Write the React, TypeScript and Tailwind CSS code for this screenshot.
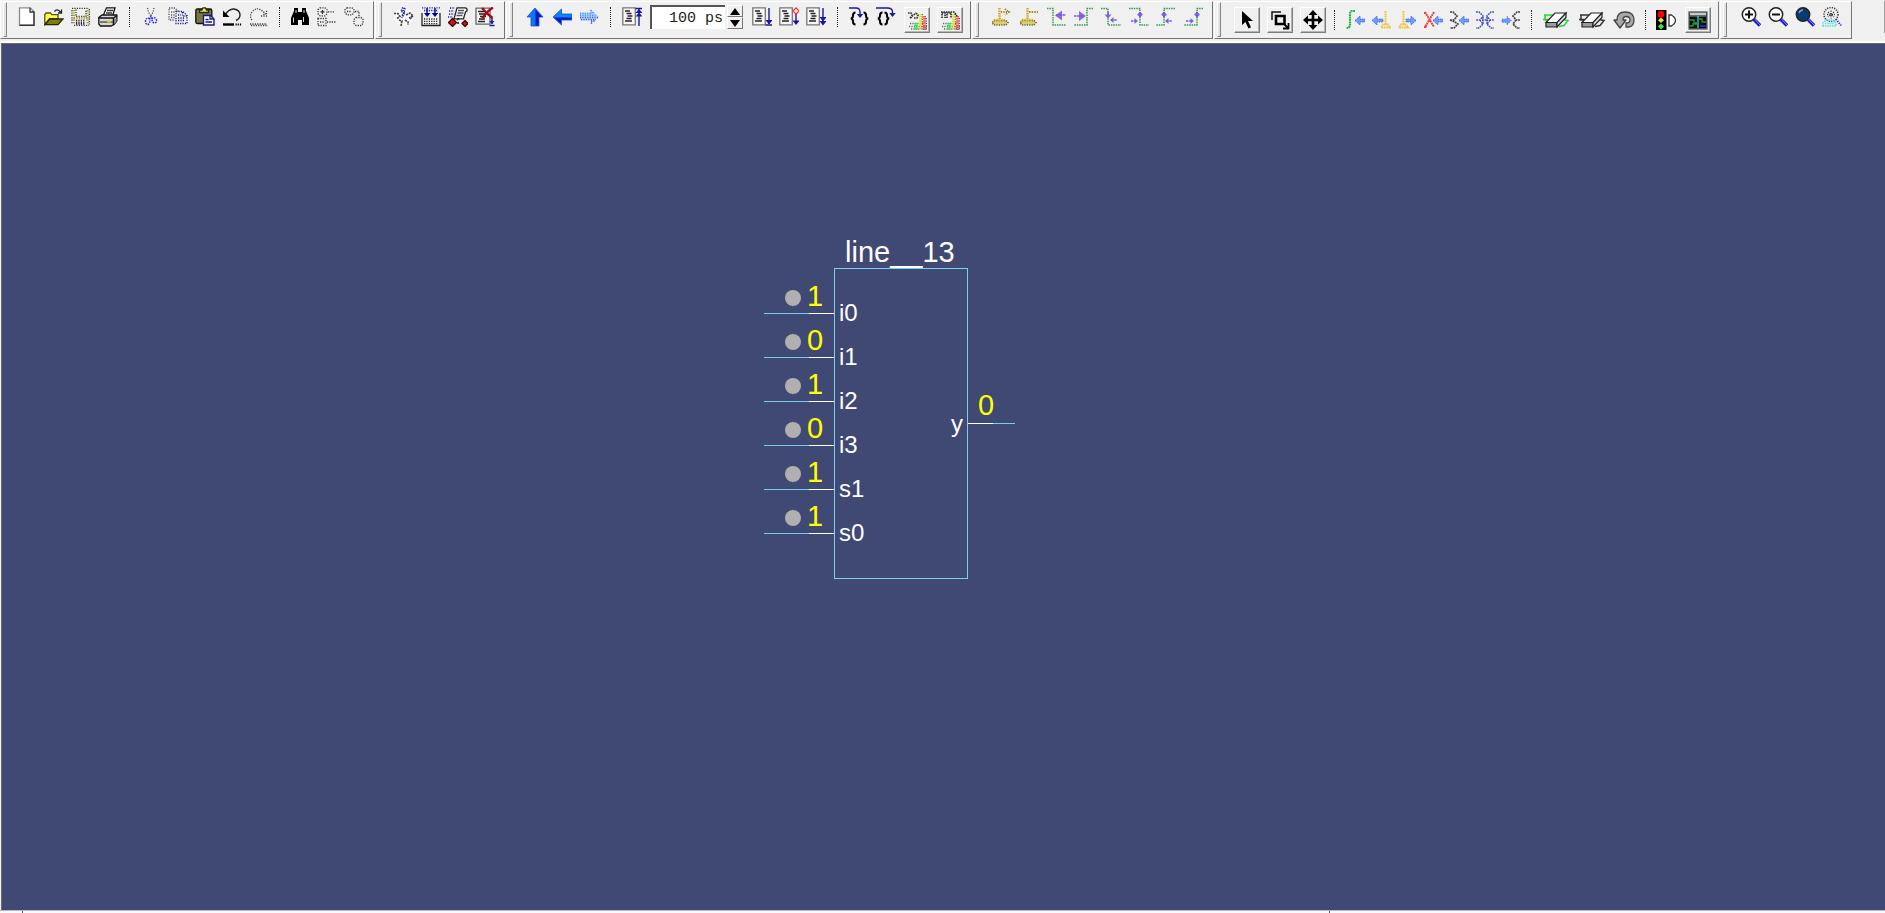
import type { ReactNode } from "react";

const DOT = "1.2 1.2";

function Icon({ children, w = 20 }: { children: ReactNode; w?: number }) {
  return (
    <svg width={w} height={20} viewBox={`0 0 ${w} 20`} fill="none" strokeWidth={1.3} aria-hidden="true" className="shrink-0">
      {children}
    </svg>
  );
}

function Tool({ label, children, width = "w-[27px]" }: { label: string; children: ReactNode; width?: string }) {
  return (
    <button type="button" aria-label={label} title={label} className={`flex h-7 ${width} shrink-0 items-center justify-center`}>
      {children}
    </button>
  );
}

function Raised({ label, children }: { label: string; children: ReactNode }) {
  return (
    <button
      type="button"
      aria-label={label}
      title={label}
      className="flex h-[26px] w-[26px] shrink-0 items-center justify-center border border-t-white border-r-[#7c7c7c] border-b-[#7c7c7c] border-l-white bg-[#f0f0f0] shadow-[inset_-1px_-1px_0_#b4b4b4]"
    >
      {children}
    </button>
  );
}

function Separator({ width = "w-3.5" }: { width?: string }) {
  return (
    <div className={`flex h-5 ${width} shrink-0 justify-center`}>
      <div className="h-5 border-l border-dotted border-[#222]" />
    </div>
  );
}

function Group({ label, pad, children }: { label: string; pad: string; children: ReactNode }) {
  return (
    <div
      role="toolbar"
      aria-label={label}
      className="mr-px flex h-[38px] shrink-0 border border-t-white border-r-[#757575] border-b-[#757575] border-l-white bg-[#f0f0f0]"
    >
      <div className="ml-0.5 h-[35px] w-1 shrink-0 border border-t-white border-r-[#858585] border-b-[#858585] border-l-white bg-[#e2e2e2]" />
      <div className={`flex h-9 items-center ${pad}`}>{children}</div>
    </div>
  );
}

/* File and edit icons */
const NewIcon = () => (
  <Icon>
    <path d="M2.500 18V.8h10.700l3.800 4V18z" fill="#fff" stroke="#8a8a8a" />
    <path d="M13 .8V5h4M17 4.600V18.400H2.400" stroke="#333" strokeWidth="1.300" />
  </Icon>
);
const OpenIcon = () => (
  <Icon>
    <path d="M.8 17.500V7.400L2 6h4.500l1.300 1.600H14v4H5.500z" fill="#ffff4d" stroke="#55551a" />
    <path d="M1 17.600 5.800 12H19l-5 5.600z" fill="#808000" stroke="#26260a" />
    <path d="M10.500 4.500Q13 1 16.500 5M17.500 2.500V6H14" stroke="#222" />
  </Icon>
);
const SaveIcon = () => (
  <Icon>
    <path d="M1 1.400h17M1 3v14M18.400 2v16M3 18.400h15M5 2.500v7h10v-7" stroke="#333" strokeDasharray={DOT} />
    <path d="M3 3v14M16.600 3v14M3 11h14" stroke="#a8a33c" strokeWidth="2.400" strokeDasharray={DOT} />
    <path d="M5 13.500h9M5 15.500h9M5 17h9" stroke="#222" strokeWidth="1.600" strokeDasharray={DOT} />
  </Icon>
);
const PrintIcon = () => (
  <Icon>
    <path d="M5 9 8.500.8H17L14.500 9" fill="#fff" stroke="#111" />
    <path d="M9 3.500h6M8 6h6" stroke="#333" />
    <path d="M.8 10.500 4 8h14.800v6L16 17.500l-3 1.500H2.500L.8 17z" fill="#d8d8d8" stroke="#111" />
    <path d="M.8 11h14.700v7M15.500 11 19 8.500" stroke="#111" strokeWidth="1.500" />
    <path d="M2 15h13" stroke="#444" />
    <path d="M9 13.500h4v2H9z" fill="#d6d600" />
    <path d="M16 11.500h2.500V15L16 17z" fill="#888" />
  </Icon>
);
const CutIcon = () => (
  <Icon>
    <path d="m6.500 1 1 4 2.500 4M13 1l-1 4-2 4" stroke="#555" strokeDasharray={DOT} />
    <path d="M9.800 9v3M9 11.500q-4-1-4.500 2 0 4 2.500 4 2-1 2-5M10.500 11.500q4-2 5 1.500 0 3-2 3-2.500-.5-2.500-4" stroke="#1616ff" strokeWidth="1.400" strokeDasharray="1.600 1" />
  </Icon>
);
const CopyIcon = () => (
  <Icon>
    <path d="M1 1h6l4 4M1 2v11h6M3 5h4M3 8h4M3 10.500h4" stroke="#555" strokeDasharray={DOT} />
    <path d="M8 4.500h7l4 4v8H8zM14.500 5v4H19M10 8h3M10 11h7M10 13.500h7" stroke="#16168c" strokeDasharray={DOT} />
  </Icon>
);
const PasteIcon = () => (
  <Icon>
    <rect x=".8" y="2" width="16" height="14.500" rx="1.500" fill="#78783c" stroke="#111" />
    <path d="M4.500 5.500V3h2.300L8 .8h2.500L11.500 3h2v2.500z" fill="#eeee30" stroke="#222" />
    <path d="M8.500 8.500h7l3.500 3.500v6H8.500z" fill="#fff" stroke="#16168c" strokeWidth="1.400" />
    <path d="M15 8.800V12h4M10.500 12.500h3M10.500 15h6.500" stroke="#16168c" />
  </Icon>
);
const UndoIcon = () => (
  <Icon>
    <path d="M2.500 8.500Q7 1.500 12 2q6 1 6 6 0 3.500-4 5.500" stroke="#222" strokeWidth="1.400" />
    <path d="M1 3.500V10h6.500z" fill="#000" />
    <path d="M1 17.500h11" stroke="#000" strokeWidth="2.400" />
    <path d="M13.500 17.500h6.500" stroke="#000" strokeWidth="2.200" strokeDasharray="1.200 1" />
  </Icon>
);
const RedoIcon = () => (
  <Icon>
    <path d="M3 13Q0 9 3 5q4-5 9-2l5 4M12 9h5.500V3M15 8V5" stroke="#444" strokeDasharray={DOT} />
    <path d="M1 17h17M2 18.500h17" stroke="#444" strokeDasharray={DOT} />
  </Icon>
);
const FindIcon = () => (
  <Icon>
    <path d="M4 1h4v4h4V1h4v3l3 7v7h-7v-5H8v5H1v-7l3-7z" fill="#000" />
    <path d="M3.500 10.500v5M13.500 10v5M6 3v3M14 3v3" stroke="#ddd" strokeWidth="1" />
  </Icon>
);
const ExpandIcon = () => (
  <Icon>
    <path d="M3 .8h5l2 2v4l-2 2H3l-2-2v-4zM11 4.800h7M1 11.500h8v7H1zM10 15h9M3 15h4" stroke="#333" strokeDasharray={DOT} />
    <path d="M3.500 4.800h4M5.500 3v4" stroke="#333" />
  </Icon>
);
const CollapseIcon = () => (
  <Icon>
    <path d="M3 .8h5l2 2v3l-2 2H3l-2-2v-3zM11 4.500h4V10M12 10.500h5l2 2v4l-2 2h-5l-2-2v-4zM3 4.500h4" stroke="#333" strokeDasharray={DOT} />
  </Icon>
);

/* Compile icons */
const CompileIcon = () => (
  <Icon>
    <ellipse cx="10" cy="10" rx="9.500" ry="9" fill="#fafafa" />
    <path d="m9 .5-2 4h4l-3 4.500M11 1l-1.500 3M10 6l-2 5" stroke="#2020b8" strokeWidth="2" strokeDasharray={DOT} />
    <path d="M0 6.500h4l2 3-3 2M5 13l3 1-1 5M12 8l4-2 3 3-4 2M11 13l3 2v3M16 12l3-3" stroke="#444" strokeWidth="1.700" strokeDasharray="2.200 .8" />
  </Icon>
);
const CompileAllIcon = () => (
  <Icon>
    <path d="M1 .8h18M3 3.500h14" stroke="#2020b8" strokeDasharray={DOT} />
    <path d="M6 1v6M14 1v6" stroke="#000098" strokeWidth="1.400" />
    <path d="M3 6h6.500L6.200 10zM10.700 6h6.500L14 10z" fill="#000098" />
    <path d="M1 6v12.500h18V6" stroke="#222" />
    <path d="M3 12h14M3 14.300h14M3 16.600h14" stroke="#222" strokeDasharray={DOT} />
  </Icon>
);
const SimulateIcon = () => (
  <Icon>
    <path d="M2 1h5M1 4h5M1 7h5M0 10h5" stroke="#1c1c9c" strokeDasharray={DOT} />
    <path d="M9 .8h8q2.500 0 2 3l-1.500 1-2 7H6z" fill="#fff" stroke="#222" />
    <path d="M10 3.500h6M9.500 6h6M8.500 8.500h6" stroke="#556" />
    <path d="m4.500 11.500 4 4-4 4-4-4zM17 13.500l3 3-3 3-3-3z" fill="#d0101c" stroke="#400" />
    <path d="m9 13 2-1.500M9 16h2" stroke="#111" strokeWidth="1.300" />
  </Icon>
);
const BreakIcon = () => (
  <Icon>
    <path d="M1 1.200h14v16H1z" fill="#f4f4f4" stroke="#666" />
    <path d="M3 4.500h6M4 7h6M5 9.500h6M4 12h6M3 14.500h7" stroke="#222" strokeWidth="1.500" />
    <path d="M7 1q4 5 10.500 10M18 .5Q11 5 7.500 11.500" stroke="#a40a18" strokeWidth="2.400" />
    <path d="M17 11v6M14.500 18.500h5" stroke="#1818a0" strokeWidth="1.400" />
    <path d="M14.500 14h5L17 17z" fill="#1818a0" />
  </Icon>
);

/* Run icons */
const UpIcon = () => (
  <Icon>
    <path d="M10 1 18 10h-4v9H6v-9H2z" fill="#0a78f5" stroke="#1450c8" strokeWidth=".8" />
    <path d="M10.500 2.500 17 10h-3.500v8.500h-3z" fill="#0a14c0" />
  </Icon>
);
const BackIcon = () => (
  <Icon>
    <path d="M1 10 9.500 2v5H20v6H9.500v5z" fill="#0a86fa" stroke="#1450c8" strokeWidth=".8" />
    <path d="M2 10.500h17.500v2.200H9v4z" fill="#0a14c0" />
  </Icon>
);
const ForwardIcon = () => (
  <Icon>
    <path d="M1 6.500h11M1 8.500h16M12 3v4M14 5v3" stroke="#3b8af2" strokeWidth="1.600" strokeDasharray={DOT} />
    <path d="M1 10.500h18M2 12.500h15M12 14h4M12 16h2" stroke="#3434c4" strokeWidth="1.600" strokeDasharray={DOT} />
    <path d="M1 5.500h10.500V2L20 9.800 11.500 17v-3.500H1z" fill="#5aa6ff" fillOpacity=".35" />
  </Icon>
);
const Sheet = () => (
  <>
    <path d="M.8.8h12.500v17H.8z" fill="#f8f8f8" stroke="#777" />
    <path d="M3 4h5M4.500 6.500h5M5.500 9h5M4.500 11.500h5M3 14h7" stroke="#222" strokeWidth="1.400" />
  </>
);
const RestartIcon = () => (
  <Icon>
    <Sheet />
    <path d="M17 1v18M13.500 1.500H20" stroke="#1818a0" strokeWidth="1.400" />
    <path d="M13.500 6 17 2l3.500 4zM13.500 9.500 17 5.500l3.500 4z" fill="#1818a0" />
  </Icon>
);
const RunIcon = () => (
  <Icon>
    <Sheet />
    <path d="M17 1v16M13.500 18h6.500" stroke="#1818a0" strokeWidth="1.400" />
    <path d="M13.500 13h7L17 17.500z" fill="#1818a0" />
  </Icon>
);
const ContinueIcon = () => (
  <Icon>
    <Sheet />
    <path d="M17 7v10" stroke="#1818a0" strokeWidth="1.400" />
    <path d="M13.500 13.500h7L17 18z" fill="#1818a0" />
    <path d="m17 1 3 3-3 3-3-3z" fill="#fff" stroke="#ff3030" />
  </Icon>
);
const RunAllIcon = () => (
  <Icon>
    <Sheet />
    <path d="M17 1v16" stroke="#1818a0" strokeWidth="1.400" />
    <path d="M13.500 10h7L17 14.500zM13.500 14h7L17 18.500z" fill="#1818a0" />
  </Icon>
);
const StepIcon = () => (
  <Icon>
    <path d="M6.500 5.500q-2.500 0-2.500 3t-2.300 3q2.300 0 2.300 3t2.500 3M14.500 5.500q2.500 0 2.500 3t2.300 3q-2.300 0-2.300 3t-2.500 3" stroke="#000" strokeWidth="2" />
    <path d="M0 1h7q4 0 4 4v3" stroke="#1818a0" strokeWidth="1.400" />
    <path d="M7.800 7h6.400L11 11z" fill="#1818a0" />
  </Icon>
);
const StepOverIcon = () => (
  <Icon>
    <path d="M6.500 5.500q-2.500 0-2.500 3t-2.300 3q2.300 0 2.300 3t2.500 3M8.500 5.500q2.500 0 2.500 3t2.300 3q-2.300 0-2.300 3t-2.500 3" stroke="#000" strokeWidth="2" />
    <path d="M0 1h11.500q5 0 5 4v2" stroke="#1818a0" strokeWidth="1.400" />
    <path d="M13.300 6h6.400l-3.200 4z" fill="#1818a0" />
  </Icon>
);
const Bars = () => (
  <>
    <path d="M2 16.500h18M3 13.500h14M4 19h16" stroke="#666" strokeWidth="1.500" strokeDasharray={DOT} />
    <path d="M9 13v7" stroke="#28e848" strokeWidth="3.600" strokeDasharray="1.500 .6" />
    <path d="M13.500 4v16" stroke="#e8e020" strokeWidth="2.800" strokeDasharray="1.500 .6" />
    <path d="M17.500 6v14" stroke="#f04848" strokeWidth="2.800" strokeDasharray="1.500 .6" />
    <path d="M15.300 4v16M19.500 8v12" stroke="#555" strokeWidth="1" strokeDasharray={DOT} />
  </>
);
const ProfileIcon = () => (
  <Icon>
    <Bars />
    <path d="M1 3h3l1 2-1 3M3 8l6-5M7 8h3l1-3-2-2" stroke="#333" strokeWidth="1.700" strokeDasharray="1.600 .8" />
  </Icon>
);
const MemoryIcon = () => (
  <Icon>
    <Bars />
    <path d="M2 8V3h3v5M7 8V3h4v5M1 2h13l3 4" stroke="#333" strokeWidth="1.700" strokeDasharray="1.600 .8" />
  </Icon>
);

/* Wave editing icons */
const Base = () => (
  <>
    <path d="M3 13.500h12l2 2-2 2.500H3l-2-2z" fill="#d8cf76" stroke="#6c6024" strokeWidth="1.600" strokeDasharray={DOT} />
    <path d="M8.500 1v13" stroke="#cda827" strokeWidth="2.400" strokeDasharray="1.600 .8" />
    <path d="M3 12.500h12" stroke="#e0c030" strokeWidth="1.500" strokeDasharray="1.600 .8" />
  </>
);
const InsertPulseIcon = () => (
  <Icon>
    <Base />
    <path d="M10 5h8M14 2l4 3-4 3" stroke="#a08420" strokeWidth="1.900" strokeDasharray={DOT} />
  </Icon>
);
const DeleteEdgeIcon = () => (
  <Icon>
    <Base />
    <path d="M10 5h9" stroke="#a88c28" strokeWidth="2" strokeDasharray="1.600 1" />
  </Icon>
);
function EdgeIcon({ wave, arrow, tips }: { wave: string; arrow: string; tips: string }) {
  return (
    <Icon>
      <path d={wave} stroke="#2c9c50" strokeWidth="1.500" strokeDasharray="1.500 .9" />
      <path d={arrow} stroke="#7858dc" strokeWidth="1.500" strokeDasharray="2.500 .7" />
      <path d={tips} fill="#7850e0" fillOpacity=".85" />
    </Icon>
  );
}

/* Dataflow icons */
const BlueArrow = ({ d }: { d: string }) => (
  <path d={d} fill="#6c9cff" stroke="#3060e8" strokeWidth="1" strokeDasharray={DOT} />
);
const toLeft = "m10 10.500 5-4.500v3h5v3h-5v3z";
const DriversIcon = () => (
  <Icon>
    <path d="M10 1H6.500L5 3v13l-1.500 2H1" stroke="#22b43c" strokeWidth="2.200" strokeDasharray="1.800 .6" />
    <BlueArrow d={toLeft} />
  </Icon>
);
const ReadersIcon = () => (
  <Icon>
    <path d="M14.500 1v14M10 17.500l2-3h5l2 3z" stroke="#ecc83c" strokeWidth="2" strokeDasharray="1.800 .6" />
    <BlueArrow d="m1 10.500 5-4.500v3h6v3H6v3z" />
  </Icon>
);
const NextReadIcon = () => (
  <Icon>
    <path d="M6.500 1v14M2 17.500l2-3h5l2 3z" stroke="#ecc83c" strokeWidth="2" strokeDasharray="1.800 .6" />
    <BlueArrow d="m19 10.500-5-4.500v3H9v3h5v3z" />
  </Icon>
);
const TraceXIcon = () => (
  <Icon>
    <path d="m2 2 9 15M11 2 2 17M1 3h2M1 17h3" stroke="#f23c3c" strokeWidth="1.900" strokeDasharray="2 .5" />
    <BlueArrow d={toLeft} />
  </Icon>
);
const forkRight = "M1 2h3l4 4-3 4H1M1 10l3 1 5 3-4 4H1";
const ForkInIcon = () => (
  <Icon>
    <path d={forkRight} stroke="#444" strokeWidth="1.700" strokeDasharray="2 .6" />
    <BlueArrow d={toLeft} />
  </Icon>
);
const ExpandNetIcon = () => (
  <Icon>
    <path d="M1 2h3l4 4-3 4H1M5 10l3 4-4 4H1M19 2h-3l-4 4 3 4h4M15 10l-3 4 4 4h3M8 7v7M12 7v7M7 10h6" stroke="#4050b8" strokeWidth="1.500" strokeDasharray="1.800 .8" />
  </Icon>
);
const ForkOutIcon = () => (
  <Icon>
    <path d="M19 2h-3l-4 4 3 4h4M15 10l-3 4 4 4h3" stroke="#444" strokeWidth="1.700" strokeDasharray="2 .6" />
    <BlueArrow d="m10 10.500-4-4v2.700H1v3h5v2.600z" />
  </Icon>
);
function EraserIcon({ wire }: { wire: string }) {
  return (
    <Icon w={28}>
      <path d="M2 5h9M3 5v5h4M1 9.500h5M21 9.500l5 1-4 5-5 1" stroke={wire} strokeWidth="1.500" />
      <path d="M13 3h11l-8.500 9.500H4z" fill="#fff" stroke="#222" strokeWidth="1.200" />
      <path d="M4 12.500h11V17H4z" fill="#9a9a9a" stroke="#222" strokeWidth="1.200" />
      <path d="m15 12.500 9-9.500v4.500L15 17z" fill="#ddd" stroke="#222" strokeWidth="1.200" />
    </Icon>
  );
}
const RefreshIcon = () => (
  <Icon w={22}>
    <path d="M1 10h3Q4 2 12 2q9 0 9 8 0 6-5 7h-3v-4q4 0 4-3 0-3.500-4-3.500-3 0-3 3.500h3l-6 8z" fill="#a8a8a8" stroke="#444" strokeLinejoin="round" />
  </Icon>
);
const TrafficIcon = () => (
  <Icon>
    <path d="M0 0h10.500v20H0z" fill="#000" />
    <circle cx="5" cy="4.200" r="3.400" fill="#f00" />
    <path d="m5 7.500 3 2.700-3 2.700-3-2.700z" fill="#e8e030" />
    <path d="m5 13.500 3 3-3 3-3-3z" fill="#2cf040" />
    <path d="M13 5h2.500q4 2.500 4 5.500t-4 5.500H13z" fill="#fff" stroke="#333" />
  </Icon>
);
const WaveWindowIcon = () => (
  <Icon>
    <path d="M1 2h18v17H1z" fill="#0a0a0a" stroke="#666" />
    <path d="M2 4h16" stroke="#c4ccd0" strokeWidth="2.600" />
    <path d="M2 6h16" stroke="#708088" />
    <path d="M2 10h4v3h3M11 9h3v3h4M2 16h3v-2h4" stroke="#18a038" />
    <path d="M10 6v12" stroke="#30d8e8" />
    <path d="M12 16h6" stroke="#3828d8" strokeWidth="1.600" />
  </Icon>
);

/* Zoom icons */
function Lens({ fill, sign }: { fill: string; sign?: string }) {
  return (
    <Icon>
      <path d="m13 12.500 6 6" stroke="#1c1ccf" strokeWidth="3.600" />
      <path d="m13.500 12 5.500 6" stroke="#8888f0" strokeWidth="1" />
      <circle cx="8" cy="7.500" r="6.700" fill={fill} stroke="#222" strokeWidth="1.500" />
      {sign ? <path d={sign} stroke="#111" strokeWidth="2" /> : <path d="M4 6q1-3 4-3" stroke="#7ca4c8" strokeWidth="1.400" />}
    </Icon>
  );
}
const ZoomRangeIcon = () => (
  <Icon>
    <circle cx="9" cy="7.500" r="7" stroke="#333" strokeWidth="1.500" strokeDasharray={DOT} />
    <path d="M5 7.500h8M9 3.500v8M6 5l6 5M12 5l-6 5" stroke="#333" strokeWidth="1.300" strokeDasharray={DOT} />
    <path d="M1 19v-3l3-3h7l3 3v3zM3 16.500h9" stroke="#4ce0ea" strokeWidth="1.600" strokeDasharray="1.500 .9" />
    <path d="m14 12 5 6.500" stroke="#2c2cc8" strokeWidth="2" strokeDasharray={DOT} />
  </Icon>
);

const EDGES = [
  { label: "Stretch edge left", wave: "M1 1.500h6v16.500h14", arrow: "M10 8h11", tips: "m9 8.500 7-5v10z" },
  { label: "Stretch edge right", wave: "M19 1.500h-6V18H0", arrow: "M0 9h10", tips: "m12 9-7-5v10z" },
  { label: "Move edge down", wave: "M0 1.500h7V18h13", arrow: "M7 5v5M10 13h6", tips: "M3.500 7.500h7L7 11.500zM9 13l3.500-3v6z" },
  { label: "Extend falling edge", wave: "M0 1.500h11V18h9", arrow: "M11 5v5M2 14h6", tips: "m11 4.500 3 3-3 3-3-3zM9 14l-3.500-3v6z" },
  { label: "Extend rising edge", wave: "M19 1.500H8V18H0", arrow: "M8 5v5M10 14h6", tips: "m8 4.500 3 3-3 3-3-3zM9 14l3.500-3v6z" },
  { label: "Invert edge", wave: "M19 1.500h-6V18H0", arrow: "M13 5v5M2 14h6", tips: "m13 4.500 3 3-3 3-3-3zM10 14l-3.500-3v6z" },
];

const INPUTS = [
  { name: "i0", value: 1 },
  { name: "i1", value: 0 },
  { name: "i2", value: 1 },
  { name: "i3", value: 0 },
  { name: "s1", value: 1 },
  { name: "s0", value: 1 },
];

function Toolbars() {
  return (
    <header className="flex h-[43px] shrink-0 overflow-hidden border-b-2 border-white bg-[#f0f0f0] pt-px">
      <Group label="Standard" pad="pl-1.5 pr-1.5 pb-1.5">
        <Tool label="New"><NewIcon /></Tool>
        <Tool label="Open"><OpenIcon /></Tool>
        <Tool label="Save"><SaveIcon /></Tool>
        <Tool label="Print"><PrintIcon /></Tool>
        <Separator width="w-4" />
        <Tool label="Cut"><CutIcon /></Tool>
        <Tool label="Copy"><CopyIcon /></Tool>
        <Tool label="Paste"><PasteIcon /></Tool>
        <Tool label="Undo"><UndoIcon /></Tool>
        <Tool label="Redo"><RedoIcon /></Tool>
        <Separator />
        <Tool label="Find"><FindIcon /></Tool>
        <Tool label="Expand"><ExpandIcon /></Tool>
        <Tool label="Collapse"><CollapseIcon /></Tool>
      </Group>

      <Group label="Compile" pad="pl-2 pr-1.5 pb-1.5">
        <Tool label="Compile"><CompileIcon /></Tool>
        <Tool label="Compile all"><CompileAllIcon /></Tool>
        <Tool label="Simulate"><SimulateIcon /></Tool>
        <Tool label="Break"><BreakIcon /></Tool>
      </Group>

      <Group label="Simulate" pad="pl-2 pr-[7px]">
        <div className="flex items-center pb-1.5">
          <Tool label="Up"><UpIcon /></Tool>
          <Tool label="Back"><BackIcon /></Tool>
          <Tool label="Forward"><ForwardIcon /></Tool>
          <Separator width="w-4" />
          <Tool label="Restart"><RestartIcon /></Tool>
          <input
            type="text"
            aria-label="Run length"
            defaultValue="100 ps"
            className="ml-[5px] h-6 w-[75px] border-t-2 border-l-2 border-[#555] bg-white pr-0.5 text-right font-['Liberation_Mono',monospace] text-[15px] text-[#222] outline-none"
          />
          <div className="mr-[5px] ml-0.5 flex w-4 flex-col">
            <button type="button" aria-label="Increase run length" className="flex h-3 items-center justify-center border border-t-white border-r-[#777] border-b-[#777] border-l-white">
              <svg width="10" height="7" viewBox="0 0 10 7" aria-hidden="true"><path d="M5 0 10 7H0z" /></svg>
            </button>
            <button type="button" aria-label="Decrease run length" className="flex h-3 items-center justify-center border border-t-white border-r-[#777] border-b-[#777] border-l-white">
              <svg width="10" height="7" viewBox="0 0 10 7" aria-hidden="true"><path d="M0 0h10L5 7z" /></svg>
            </button>
          </div>
          <Tool label="Run"><RunIcon /></Tool>
          <Tool label="Continue"><ContinueIcon /></Tool>
          <Tool label="Run all"><RunAllIcon /></Tool>
          <Separator width="w-4" />
          <Tool label="Step"><StepIcon /></Tool>
          <Tool label="Step over"><StepOverIcon /></Tool>
        </div>
        <div className="ml-[5px] flex gap-[7px]">
          <Raised label="Performance profiling"><ProfileIcon /></Raised>
          <Raised label="Memory profiling"><MemoryIcon /></Raised>
        </div>
      </Group>

      <Group label="Wave edit" pad="pl-3 pr-2 pb-1.5">
        <div className="flex w-[213px] justify-between">
          <Tool label="Insert pulse" width="w-5"><InsertPulseIcon /></Tool>
          <Tool label="Delete edge" width="w-5"><DeleteEdgeIcon /></Tool>
          {EDGES.map((e) => (
            <Tool key={e.label} label={e.label} width="w-5">
              <EdgeIcon wave={e.wave} arrow={e.arrow} tips={e.tips} />
            </Tool>
          ))}
        </div>
      </Group>

      <Group label="Dataflow" pad="pl-[13px] pr-[7px]">
        <div className="flex gap-[7px]">
          <Raised label="Select mode">
            <Icon><path d="M5 1v14l3.500-3 3 6.500 2.500-1.200-3-6.300h5z" fill="#000" /></Icon>
          </Raised>
          <Raised label="Zoom mode">
            <Icon>
              <path d="M2 10V2h9" stroke="#111" strokeWidth="1.500" />
              <path d="M6 6h8.500v8H6z" stroke="#000" strokeWidth="2.600" />
              <path d="m14 14 4 4M13 18.500h6M18.500 13v6" stroke="#000" strokeWidth="1.800" />
            </Icon>
          </Raised>
          <Raised label="Pan mode">
            <Icon>
              <path d="M10 2v16M2 10h16" stroke="#000" strokeWidth="2.600" />
              <path d="m10 0 4.500 5h-9zM10 20l4.500-5h-9zM0 10l5-4.500v9zM20 10l-5-4.500v9z" fill="#000" />
            </Icon>
          </Raised>
        </div>
        <Separator width="w-4" />
        <Tool label="Trace drivers" width="w-[26px]"><DriversIcon /></Tool>
        <Tool label="Trace readers" width="w-[26px]"><ReadersIcon /></Tool>
        <Tool label="Trace next reader" width="w-[26px]"><NextReadIcon /></Tool>
        <Tool label="Trace unknowns" width="w-[26px]"><TraceXIcon /></Tool>
        <Tool label="Expand net to drivers" width="w-[26px]"><ForkInIcon /></Tool>
        <Tool label="Expand net" width="w-[26px]"><ExpandNetIcon /></Tool>
        <Tool label="Expand net to readers" width="w-[26px]"><ForkOutIcon /></Tool>
        <Separator />
        <Tool label="Erase highlight" width="w-9"><EraserIcon wire="#20d838" /></Tool>
        <Tool label="Erase all" width="w-9"><EraserIcon wire="#333" /></Tool>
        <Tool label="Regenerate" width="w-7"><RefreshIcon /></Tool>
        <Separator />
        <Tool label="Stop drawing"><TrafficIcon /></Tool>
        <div className="ml-1.5">
          <Raised label="Show wave"><WaveWindowIcon /></Raised>
        </div>
      </Group>

      <Group label="Zoom" pad="pl-2.5 pr-1.5 pb-1.5">
        <Tool label="Zoom in"><Lens fill="#fff" sign="M4 7.500h8M8 3.500v8" /></Tool>
        <Tool label="Zoom out"><Lens fill="#fff" sign="M4 7.500h8" /></Tool>
        <Tool label="Zoom full"><Lens fill="#063c70" /></Tool>
        <Tool label="Zoom to range"><ZoomRangeIcon /></Tool>
      </Group>
      <div className="ml-auto h-8 border-l border-[#a0a0a0]" />
    </header>
  );
}

function Wire({ flip = false }: { flip?: boolean }) {
  return (
    <div className={`flex h-px ${flip ? "flex-row-reverse" : ""}`}>
      <div className="h-px flex-1 bg-[#7accE8]" />
      <div className="h-px w-[25px] bg-white" />
    </div>
  );
}

function Schematic() {
  return (
    <section aria-label="Schematic" className="absolute top-[189px] left-[762px] flex w-[251px] pt-[35px] text-white">
      <div className="w-[70px] pt-0.5">
        {INPUTS.map((pin) => (
          <div key={pin.name} className="flex h-11 flex-col justify-end">
            <div className="flex h-8 items-center pb-0.5 pl-[21px]">
              <span className="mt-1 h-4 w-4 rounded-full bg-[#b0b0b0]" />
              <span className="ml-1.5 text-[29px] leading-7 text-[#ffff00]">{pin.value}</span>
            </div>
            <Wire />
          </div>
        ))}
      </div>
      <div className="relative h-[311px] w-[134px] border border-[#78d0e8] pt-[30px]">
        <h1 className="absolute -top-[33px] left-2.5 text-[29px] leading-8 whitespace-nowrap">line__13</h1>
        {INPUTS.map((pin) => (
          <div key={pin.name} className="h-11 pl-1 text-2xl leading-7">{pin.name}</div>
        ))}
        <div className="absolute top-[141px] right-1 text-2xl leading-7">y</div>
      </div>
      <div className="flex-1 pt-[121px]">
        <div className="flex h-[34px] items-start pl-2.5 text-[29px] leading-8 text-[#ffff00]">0</div>
        <Wire flip />
      </div>
    </section>
  );
}

export default function App() {
  return (
    <div className="flex h-screen flex-col overflow-hidden bg-[#f0f0f0] font-['Liberation_Sans',Arial,sans-serif]">
      <Toolbars />
      <main className="relative ml-px flex-1 border-t border-l border-[#6c6c6c] bg-[#404973]">
        <Schematic />
      </main>
      <footer className="flex h-[3px] shrink-0 border-t border-[#b4b8c8] bg-[#fafafc]">
        <div className="w-[23px] shrink-0 border-r border-[#555]" />
        <div className="w-[1307px] border-r border-[#555]" />
      </footer>
    </div>
  );
}
